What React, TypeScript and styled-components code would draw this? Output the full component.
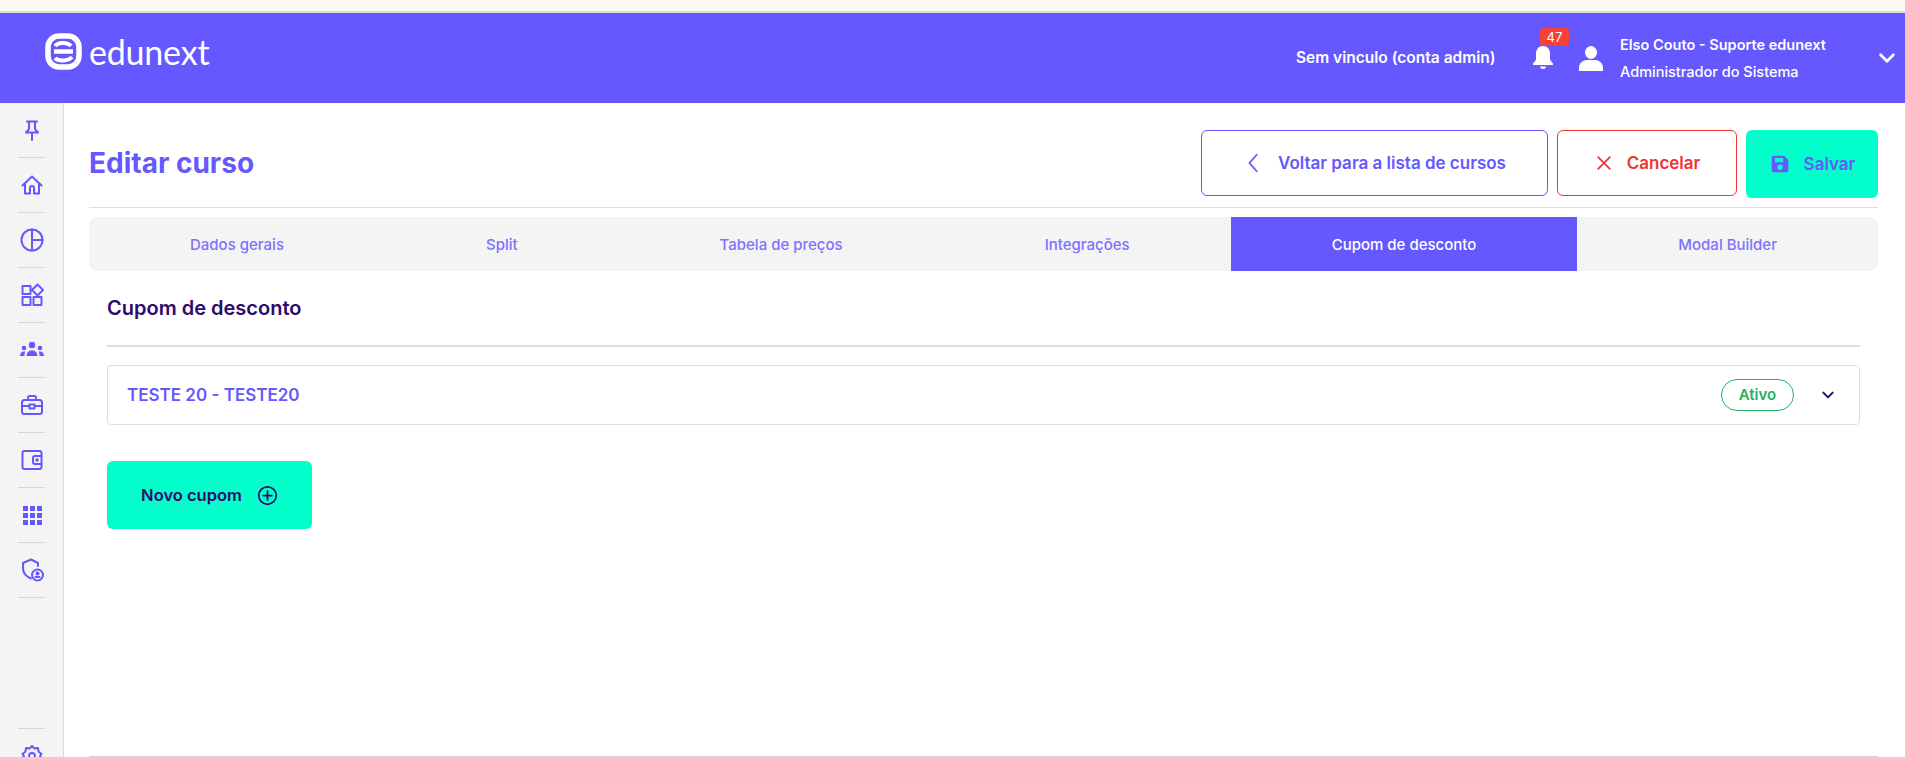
import React from "react";
import styled, { createGlobalStyle } from "styled-components";

// Style
const Primary = "#6558ff";
const Dark = "#2d0a6b";
const Teal = "#00ffcb";
const Red = "#f03232";
const Green = "#27ae60";
const Line = "#dedede";

const GlobalStyle = createGlobalStyle`
  html, body {
    margin: 0;
    padding: 0;
    height: 757px;
    overflow: hidden;
    background: #fff;
    font-family: Inter, "Liberation Sans", sans-serif;
  }
  * { box-sizing: border-box; }
`;

const tabs = ["Dados gerais", "Split", "Tabela de preços", "Integrações", "Cupom de desconto", "Modal Builder"];

// Icons
const Svg = ({ size = 24, children, fill = "none" }: { size?: number; children: React.ReactNode; fill?: string }) => (
  <svg
    width={size}
    height={size}
    viewBox="0 0 24 24"
    fill={fill}
    stroke={fill === "none" ? "currentColor" : "none"}
    strokeWidth={2}
    strokeLinecap="round"
    strokeLinejoin="round"
  >
    {children}
  </svg>
);

const sideIcons: React.ReactNode[] = [
  <Svg key="pin">
    <path d="M7 3.5h10M9 3.5V11l-3 3.5h12L15 11V3.5M12 14.5V22" />
  </Svg>,
  <Svg key="home">
    <path d="M2.5 12.5 12 3.5l9.5 9M5 11v9.5h5V15a2 2 0 0 1 4 0v5.5h5V11" />
  </Svg>,
  <Svg key="pie">
    <circle cx="12" cy="12" r="10.5" />
    <path d="M12 1.5v21M12 12h10.5" />
  </Svg>,
  <Svg key="apps">
    <path d="M2.5 3h8v8h-8zM2.5 14h8v8h-8zM13.5 14h8v8h-8zM17.5 1.5 23 7l-5.5 5.5L12 7z" />
  </Svg>,
  <Svg key="team" fill={Primary}>
    <circle cx="12" cy="7" r="3.2" />
    <circle cx="4" cy="10" r="2.3" />
    <circle cx="20" cy="10" r="2.3" />
    <path d="M6.5 18c0-3.5 2.5-5.5 5.5-5.5s5.5 2 5.5 5.5zM0 18c0-2.5 1.5-4.5 4-4.5.5 0 1 .1 1.400.3C4.500 15 4.500 16.500 4.500 18zM24 18c0-2.500-1.500-4.500-4-4.500-.5 0-1 .1-1.400.3 .9 1.200.9 2.700.9 4.200z" />
  </Svg>,
  <Svg key="case">
    <rect x="2" y="7" width="20" height="14" rx="2.500" />
    <path d="M8 7V5a2 2 0 0 1 2-2h4a2 2 0 0 1 2 2v2M2 13h7M15 13h7M9.500 11.500h5v4h-5z" />
  </Svg>,
  <Svg key="wallet">
    <rect x="2.500" y="3" width="19" height="18" rx="2" />
    <path d="M21.500 8H15a2 2 0 0 0-2 2v4a2 2 0 0 0 2 2h6.500" />
    <circle cx="17" cy="12" r=".8" />
  </Svg>,
  <Svg key="grid" fill={Primary}>
    <path d="M3 3h5v5H3zM10 3h5v5h-5zM17 3h5v5h-5zM3 10h5v5H3zM10 10h5v5h-5zM17 10h5v5h-5zM3 17h5v5H3zM10 17h5v5h-5zM17 17h5v5h-5z" />
  </Svg>,
  <Svg key="shield">
    <path d="M11 20.500C6 18.500 3 15 3 10V5l8-3.500L18 5v3" />
    <circle cx="17.500" cy="17" r="5.500" />
    <circle cx="17.500" cy="15.500" r="1" />
    <path d="M15.500 19h4" />
  </Svg>,
];

const CaretDown = ({ size = 16 }: { size?: number }) => (
  <Svg size={size}>
    <path d="m5 8.500 7 7 7-7" strokeWidth={3} />
  </Svg>
);

// Page
export default function App() {
  return (
    <>
      <GlobalStyle />
      <BrowserEdge />
      <Header>
        <Logo>
          <svg width="37" height="37" viewBox="0 0 37 37" fill="none" stroke="#fff">
            <rect x="3" y="3" width="31" height="31" rx="11" strokeWidth="5.500" />
            <path d="M9 18.500h19" strokeWidth="4.500" />
            <path d="M10 13c3-4 13-4 16 0M10 25c3 3.500 13 3.500 17-1" strokeWidth="4" />
          </svg>
          <LogoText>edunext</LogoText>
        </Logo>
        <HeaderRight>
          <Affiliation>Sem vinculo (conta admin)</Affiliation>
          <BellWrap>
            <svg width="24" height="26" viewBox="0 0 24 26" fill="#fff">
              <path d="M12 2c-4.500 0-7 3.500-7 8v4.500c0 2-1.500 3.500-3 5V21h20v-1.500c-1.500-1.500-3-3-3-5V10c0-4.500-2.500-8-7-8z" />
              <path d="M9 22.500h6c0 1.500-1.300 2.500-3 2.500s-3-1-3-2.500z" />
            </svg>
            <Badge>47</Badge>
          </BellWrap>
          <UserIcon>
            <svg width="24" height="26" viewBox="0 0 24 26" fill="#fff">
              <ellipse cx="12" cy="7.500" rx="6" ry="6.500" />
              <path d="M0 26v-3c0-5 4-8 8-8h8c4 0 8 3 8 8v3z" />
            </svg>
          </UserIcon>
          <UserInfo>
            <UserName>Elso Couto - Suporte edunext</UserName>
            <UserRole>Administrador do Sistema</UserRole>
          </UserInfo>
          <HeaderCaret>
            <CaretDown size={22} />
          </HeaderCaret>
        </HeaderRight>
      </Header>
      <Body>
        <Sidebar>
          {sideIcons.map((icon, i) => (
            <SideItem key={i}>{icon}</SideItem>
          ))}
          <SideSpacer />
          <SideItem>
            <Svg>
              <path d="M12 2l2.500 2.500 3.500-.5.5 3.500L21.500 10 20 12l1.500 2-3 2.500-.5 3.500-3.500-.5L12 22l-2.500-2.500-3.500.5-.5-3.500L2.500 14 4 12l-1.500-2 3-2.500.5-3.500 3.500.5z" />
              <circle cx="12" cy="12" r="3" />
            </Svg>
          </SideItem>
        </Sidebar>
        <Main>
          <TopBar>
            <PageTitle>Editar curso</PageTitle>
            <Actions>
              <OutlineButton $color={Primary} $width={347}>
                <Svg size={22}>
                  <path d="M15 3 7 12l8 9" />
                </Svg>
                Voltar para a lista de cursos
              </OutlineButton>
              <OutlineButton $color={Red} $width={180}>
                <Svg size={20}>
                  <path d="M5 5l14 14M19 5 5 19" />
                </Svg>
                Cancelar
              </OutlineButton>
              <SaveButton>
                <Svg size={22} fill={Primary}>
                  <path d="M5 3h11.500L21 7.500V19a2 2 0 0 1-2 2H5a2 2 0 0 1-2-2V5a2 2 0 0 1 2-2zm1.500 2.500V10h9V5.500zM12 12.500a3 3 0 1 0 0 6 3 3 0 0 0 0-6z" fillRule="evenodd" />
                </Svg>
                Salvar
              </SaveButton>
            </Actions>
          </TopBar>
          <TabBar>
            {tabs.map((tab) => (
              <Tab key={tab} $active={tab === "Cupom de desconto"}>
                {tab}
              </Tab>
            ))}
          </TabBar>
          <Section>
            <SectionTitle>Cupom de desconto</SectionTitle>
            <SectionLine />
            <CouponCard>
              <CouponName>TESTE 20 - TESTE20</CouponName>
              <StatusBadge>Ativo</StatusBadge>
              <CouponCaret>
                <CaretDown />
              </CouponCaret>
            </CouponCard>
            <NewButton>
              Novo cupom
              <Svg size={21}>
                <circle cx="12" cy="12" r="10" />
                <path d="M12 7v10M7 12h10" />
              </Svg>
            </NewButton>
          </Section>
          <Footer />
        </Main>
      </Body>
    </>
  );
}

const BrowserEdge = styled.div`
  height: 13px;
  background: #f7f9f2;
  border-bottom: 2px solid #d9dbd6;
`;

const Header = styled.header`
  height: 90px;
  background: ${Primary};
  display: flex;
  align-items: center;
  justify-content: space-between;
  padding: 0 7px 0 45px;
  color: #fff;
`;

const Logo = styled.div`
  display: flex;
  align-items: center;
  gap: 7px;
  margin-top: -14px;
`;

const LogoText = styled.span`
  font-family: Lato, sans-serif;
  font-size: 34px;
  line-height: 37px;
  font-weight: 400;
  letter-spacing: -0.2px;
`;

const HeaderRight = styled.div`
  display: flex;
  align-items: center;
`;

const Affiliation = styled.span`
  font-size: 15.500px;
  font-weight: 600;
  width: 235px;
  margin-top: -2px;
`;

const BellWrap = styled.div`
  position: relative;
  display: flex;
  width: 24px;
  margin-top: -3px;
`;

const Badge = styled.span`
  position: absolute;
  top: -16px;
  left: 9px;
  width: 29px;
  height: 18px;
  border-radius: 4px;
  background: #f44336;
  font-size: 13px;
  line-height: 18px;
  text-align: center;
`;

const UserIcon = styled.div`
  display: flex;
  margin: 0 17px 0 24px;
`;

const UserInfo = styled.div`
  display: flex;
  flex-direction: column;
  gap: 9px;
  width: 256px;
`;

const UserName = styled.span`
  font-size: 14.500px;
  line-height: 18px;
  font-weight: 600;
`;

const UserRole = styled.span`
  font-size: 14.500px;
  line-height: 18px;
  font-weight: 500;
`;

const HeaderCaret = styled.div`
  display: flex;
`;

const Body = styled.div`
  display: flex;
  height: 654px;
`;

const Sidebar = styled.nav`
  width: 64px;
  flex-shrink: 0;
  height: 680px;
  background: #f4f4f4;
  border-right: 1px solid #dcdcdc;
  display: flex;
  flex-direction: column;
  align-items: center;
  color: ${Primary};
`;

const SideItem = styled.div`
  width: 27px;
  height: 55px;
  flex-shrink: 0;
  display: flex;
  align-items: center;
  justify-content: center;
  border-bottom: 1px solid #d6d6d6;
  &:last-child {
    border-bottom: none;
    border-top: 1px solid #d6d6d6;
  }
`;

const SideSpacer = styled.div`
  flex: 1;
`;

const Main = styled.main`
  flex: 1;
  min-width: 0;
  padding: 0 27px 0 25px;
  display: flex;
  flex-direction: column;
`;

const TopBar = styled.div`
  display: flex;
  align-items: flex-start;
  justify-content: space-between;
  height: 105px;
  padding-top: 27px;
  border-bottom: 1px solid ${Line};
`;

const PageTitle = styled.h1`
  margin: 16px 0 0;
  color: ${Primary};
  font-size: 28px;
  line-height: 34px;
  font-weight: 700;
`;

const Actions = styled.div`
  display: flex;
  gap: 9px;
`;

const OutlineButton = styled.button<{ $color: string; $width: number }>`
  width: ${(p) => p.$width}px;
  height: 66px;
  border: 1px solid ${(p) => p.$color};
  border-radius: 6px;
  background: #fff;
  color: ${(p) => p.$color};
  font: 600 17px Inter, sans-serif;
  display: flex;
  align-items: center;
  justify-content: center;
  gap: 13px;
`;

const SaveButton = styled.button`
  width: 132px;
  height: 68px;
  border: none;
  border-radius: 6px;
  background: ${Teal};
  color: ${Primary};
  font: 600 17px Inter, sans-serif;
  display: flex;
  align-items: center;
  justify-content: center;
  gap: 13px;
`;

const TabBar = styled.div`
  display: flex;
  height: 54px;
  margin-top: 9px;
  background: #f4f4f4;
  border-radius: 8px;
  overflow: hidden;
`;

const Tab = styled.div<{ $active: boolean }>`
  flex: 1 1 auto;
  display: flex;
  align-items: center;
  justify-content: center;
  font-size: 15px;
  font-weight: 500;
  color: ${(p) => (p.$active ? "#fff" : "#7d72ff")};
  background: ${(p) => (p.$active ? Primary : "transparent")};
`;

const Section = styled.section`
  flex: 1;
  padding: 0 18px;
`;

const SectionTitle = styled.h2`
  margin: 24px 0 0;
  height: 50px;
  color: ${Dark};
  font-size: 20px;
  line-height: 26px;
  font-weight: 600;
`;

const SectionLine = styled.div`
  height: 2px;
  background: ${Line};
`;

const CouponCard = styled.div`
  margin-top: 18px;
  height: 60px;
  border: 1px solid ${Line};
  border-radius: 4px;
  padding: 0 23px 0 19px;
  display: flex;
  align-items: center;
`;

const CouponName = styled.span`
  flex: 1;
  color: ${Primary};
  font-size: 17px;
  font-weight: 600;
`;

const StatusBadge = styled.span`
  width: 73px;
  height: 32px;
  border: 1px solid ${Green};
  border-radius: 16px;
  color: ${Green};
  font-size: 15px;
  font-weight: 600;
  line-height: 30px;
  text-align: center;
`;

const CouponCaret = styled.div`
  margin-left: 26px;
  display: flex;
  color: ${Dark};
`;

const NewButton = styled.button`
  margin-top: 36px;
  width: 205px;
  height: 68px;
  border: none;
  border-radius: 6px;
  background: ${Teal};
  color: ${Dark};
  font: 600 16.500px Inter, sans-serif;
  display: flex;
  align-items: center;
  justify-content: center;
  gap: 15px;
`;

const Footer = styled.div`
  height: 1px;
  background: #cfcfcf;
`;
